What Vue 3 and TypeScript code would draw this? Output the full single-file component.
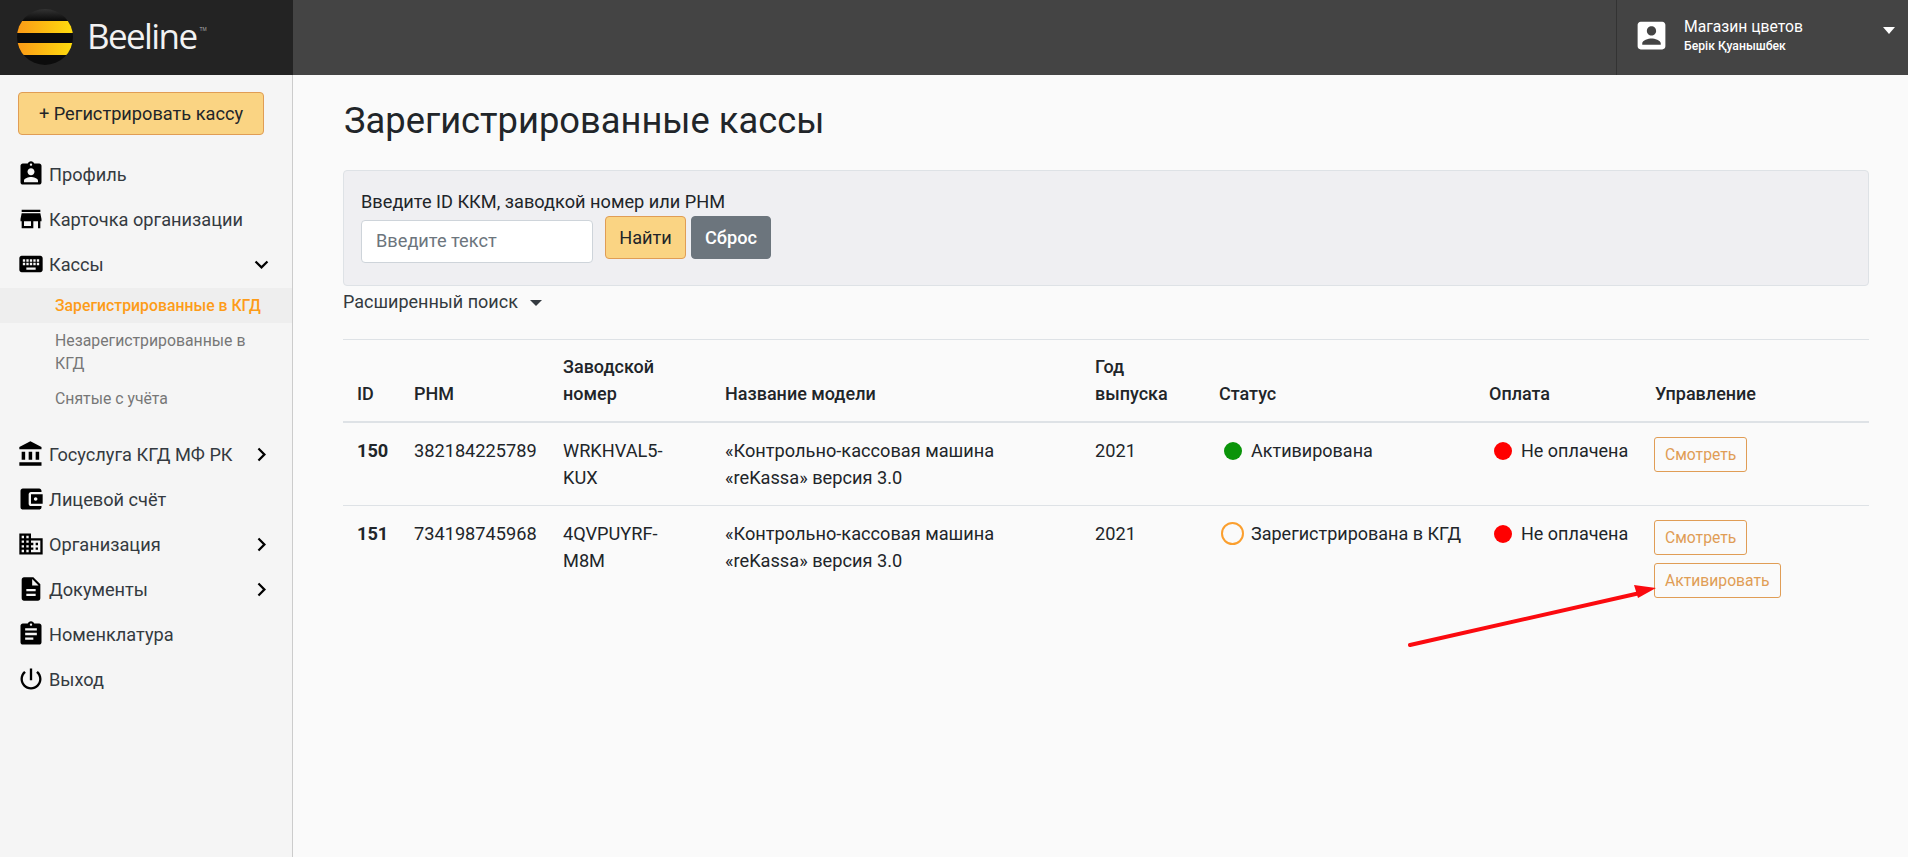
<script setup lang="ts">
interface NavItem { label: string; icon: string; chevron?: 'down' | 'right'; subs?: { label: string; active?: boolean }[] }
const icons: Record<string, string> = {
  ind: 'M19 3h-4.18C14.4 1.84 13.3 1 12 1c-1.3 0-2.4.84-2.82 2H5c-1.1 0-2 .9-2 2v14c0 1.1.9 2 2 2h14c1.1 0 2-.9 2-2V5c0-1.1-.9-2-2-2zm-7 0c.55 0 1 .45 1 1s-.45 1-1 1-1-.45-1-1 .45-1 1-1zm0 4c1.66 0 3 1.34 3 3s-1.34 3-3 3-3-1.34-3-3 1.34-3 3-3zm6 12H6v-1.4c0-2 4-3.1 6-3.1s6 1.1 6 3.1V19z',
  store: 'M20 4H4v2h16V4zm1 10v-2l-1-5H4l-1 5v2h1v6h10v-6h4v6h2v-6h1zm-9 4H6v-4h6v4z',
  keyboard: 'M20 5H4c-1.1 0-1.99.9-1.99 2L2 17c0 1.1.9 2 2 2h16c1.1 0 2-.9 2-2V7c0-1.1-.9-2-2-2zm-9 3h2v2h-2V8zm0 3h2v2h-2v-2zM8 8h2v2H8V8zm0 3h2v2H8v-2zm-1 2H5v-2h2v2zm0-3H5V8h2v2zm9 7H8v-2h8v2zm0-4h-2v-2h2v2zm0-3h-2V8h2v2zm3 3h-2v-2h2v2zm0-3h-2V8h2v2z',
  bank: 'M4 10v7h3v-7H4zm6 0v7h3v-7h-3zM2 22h19v-3H2v3zm14-12v7h3v-7h-3zm-4.5-9L2 6v2h19V6l-9.5-5z',
  wallet: 'M21 18v1c0 1.1-.9 2-2 2H5c-1.11 0-2-.9-2-2V5c0-1.1.89-2 2-2h14c1.1 0 2 .9 2 2v1h-9c-1.11 0-2 .9-2 2v8c0 1.1.89 2 2 2h9zm-9-2h10V8H12v8zm4-2.5c-.83 0-1.5-.67-1.5-1.5s.67-1.5 1.5-1.5 1.5.67 1.5 1.5-.67 1.5-1.5 1.5z',
  domain: 'M12 7V3H2v18h20V7H12zM6 19H4v-2h2v2zm0-4H4v-2h2v2zm0-4H4V9h2v2zm0-4H4V5h2v2zm4 12H8v-2h2v2zm0-4H8v-2h2v2zm0-4H8V9h2v2zm0-4H8V5h2v2zm10 12h-8v-2h2v-2h-2v-2h2v-2h-2V9h8v10zm-2-8h-2v2h2v-2zm0 4h-2v2h2v-2z',
  doc: 'M14 2H6c-1.1 0-1.99.9-1.99 2L4 20c0 1.1.89 2 1.99 2H18c1.1 0 2-.9 2-2V8l-6-6zm2 16H8v-2h8v2zm0-4H8v-2h8v2zm-3-5V3.5L18.5 9H13z',
  assign: 'M19 3h-4.18C14.4 1.84 13.3 1 12 1c-1.3 0-2.4.84-2.82 2H5c-1.1 0-2 .9-2 2v14c0 1.1.9 2 2 2h14c1.1 0 2-.9 2-2V5c0-1.1-.9-2-2-2zm-7 0c.55 0 1 .45 1 1s-.45 1-1 1-1-.45-1-1 .45-1 1-1zm2 14H7v-2h7v2zm3-4H7v-2h10v2zm0-4H7V7h10v2z',
  power: 'M13 3h-2v10h2V3zm4.83 2.17l-1.42 1.42C17.99 7.86 19 9.81 19 12c0 3.87-3.13 7-7 7s-7-3.13-7-7c0-2.19 1.01-4.14 2.58-5.42L6.17 5.17C4.23 6.82 3 9.26 3 12c0 4.97 4.03 9 9 9s9-4.03 9-9c0-2.74-1.23-5.18-3.17-6.83z',
  box: 'M3 5v14c0 1.1.89 2 2 2h14c1.1 0 2-.9 2-2V5c0-1.1-.9-2-2-2H5c-1.11 0-2 .9-2 2zm12 4c0 1.66-1.34 3-3 3s-3-1.34-3-3 1.34-3 3-3 3 1.34 3 3zm-9 8c0-2 4-3.1 6-3.1s6 1.1 6 3.1v1H6v-1z',
  down: 'M7.41 8.59L12 13.17l4.59-4.58L18 10l-6 6-6-6 1.41-1.41z',
  right: 'M8.59 16.59L13.17 12 8.59 7.41 10 6l6 6-6 6-1.41-1.41z',
}
const nav: NavItem[] = [
  { label: 'Профиль', icon: 'ind' },
  { label: 'Карточка организации', icon: 'store' },
  { label: 'Кассы', icon: 'keyboard', chevron: 'down', subs: [
    { label: 'Зарегистрированные в КГД', active: true },
    { label: 'Незарегистрированные в КГД' },
    { label: 'Снятые с учёта' },
  ] },
  { label: 'Госуслуга КГД МФ РК', icon: 'bank', chevron: 'right' },
  { label: 'Лицевой счёт', icon: 'wallet' },
  { label: 'Организация', icon: 'domain', chevron: 'right' },
  { label: 'Документы', icon: 'doc', chevron: 'right' },
  { label: 'Номенклатура', icon: 'assign' },
  { label: 'Выход', icon: 'power' },
]
const cols = [57, 149, 162, 370, 124, 270, 166, 228]
const rows = [
  { id: 150, rnm: '382184225789', serial: ['WRKHVAL5-', 'KUX'], status: 'Активирована', dot: 'green', activate: false },
  { id: 151, rnm: '734198745968', serial: ['4QVPUYRF-', 'M8M'], status: 'Зарегистрирована в КГД', dot: 'ring', activate: true },
]
</script>

<template>
  <div class="page">
    <header class="top">
      <div class="brand">
        <svg class="logo" viewBox="0 0 56 56" width="56" height="56">
          <defs>
            <clipPath id="ball"><circle cx="28" cy="28" r="28" /></clipPath>
            <linearGradient id="gold" x1="0" x2="1" y1="0" y2="0">
              <stop offset="0" stop-color="#fb9a17" />
              <stop offset="1" stop-color="#fedc0e" />
            </linearGradient>
            <linearGradient id="shade" x1="0" x2="0" y1="0" y2="1">
              <stop offset="0" stop-color="#333" />
              <stop offset="0.2" stop-color="#0c0c0c" />
            </linearGradient>
          </defs>
          <g clip-path="url(#ball)">
            <rect width="56" height="56" fill="url(#shade)" />
            <rect y="12" width="56" height="12" fill="url(#gold)" />
            <rect y="34" width="56" height="12" fill="url(#gold)" />
          </g>
        </svg>
        <span class="wordmark">Beeline</span><span class="tm">TM</span>
      </div>
      <div class="spacer"></div>
      <div class="account">
        <svg class="acc-icon" viewBox="0 0 24 24"><path :d="icons.box" /></svg>
        <div class="acc-text">
          <div class="acc-name">Магазин цветов</div>
          <div class="acc-sub">Берік Қуанышбек</div>
        </div>
        <span class="acc-caret"></span>
      </div>
    </header>

    <div class="body">
      <aside class="side">
        <button class="btn-reg">+ Регистрировать кассу</button>
        <nav class="nav">
          <div v-for="item in nav" :key="item.label" class="nav-group">
            <div class="nav-item">
              <svg class="nav-icon" viewBox="0 0 24 24"><path :d="icons[item.icon]" /></svg>
              <span class="nav-label">{{ item.label }}</span>
              <svg v-if="item.chevron" class="nav-chev" viewBox="0 0 24 24"><path :d="icons[item.chevron]" /></svg>
            </div>
            <div v-if="item.subs" class="subs">
              <div v-for="s in item.subs" :key="s.label" class="sub" :class="{ active: s.active }">{{ s.label }}</div>
            </div>
          </div>
        </nav>
      </aside>

      <main class="main">
        <h1 class="title">Зарегистрированные кассы</h1>
        <section class="search">
          <div class="search-label">Введите ID ККМ, заводкой номер или РНМ</div>
          <div class="search-row">
            <input class="search-input" placeholder="Введите текст" />
            <button class="btn btn-find">Найти</button>
            <button class="btn btn-reset">Сброс</button>
          </div>
        </section>
        <div class="advanced">Расширенный поиск <span class="adv-caret"></span></div>
        <table class="table">
          <colgroup><col v-for="(c, i) in cols" :key="i" :style="{ width: c + 'px' }" /></colgroup>
          <thead>
            <tr>
              <th>ID</th><th>РНМ</th><th>Заводской номер</th><th>Название модели</th>
              <th>Год выпуска</th><th>Статус</th><th>Оплата</th><th>Управление</th>
            </tr>
          </thead>
          <tbody>
            <tr v-for="r in rows" :key="r.id">
              <td class="strong">{{ r.id }}</td>
              <td>{{ r.rnm }}</td>
              <td>{{ r.serial[0] }}<br />{{ r.serial[1] }}</td>
              <td>«Контрольно-кассовая машина<br />«reKassa» версия 3.0</td>
              <td>2021</td>
              <td>
                <div class="state"><span class="dot" :class="r.dot"></span>{{ r.status }}</div>
              </td>
              <td>
                <div class="state pay"><span class="dot red"></span>Не оплачена</div>
              </td>
              <td class="ctl">
                <div class="actions">
                  <button class="btn-line">Смотреть</button>
                  <button v-if="r.activate" class="btn-line">Активировать</button>
                </div>
              </td>
            </tr>
          </tbody>
        </table>
      </main>
    </div>

    <svg class="arrow" width="280" height="70" viewBox="0 0 280 70">
      <path d="M4 61 L234 9" stroke="#fb0a0f" stroke-width="4" stroke-linecap="round" fill="none" />
      <path d="M250 4 L228 1 L232 14 Z" fill="#fb0a0f" />
    </svg>
  </div>
</template>

<style>
html, body { margin: 0; height: 100%; overflow: hidden; background: #fafafa; }
</style>

<style scoped>
.page {
  position: relative;
  width: 1908px;
  height: 857px;
  display: flex;
  flex-direction: column;
  font-family: Roboto, "Noto Sans", sans-serif;
  color: #212529;
  font-size: 18.2px;
  overflow: hidden;
}
.top { height: 75px; display: flex; background: #444; flex: none; }
.brand {
  width: 293px;
  background: #232323;
  display: flex;
  align-items: center;
  padding-left: 17px;
  box-sizing: border-box;
}
.logo { flex: none; margin-top: -1px; }
.wordmark {
  font-family: "Open Sans", sans-serif;
  color: #f2f2f2;
  font-size: 35px;
  font-weight: 500;
  letter-spacing: -1.6px;
  margin-left: 14px;
  margin-top: -4px;
}
.tm { color: #aaa; font-size: 5px; margin: -17px 0 0 3px; font-family: "Liberation Sans", sans-serif; }
.spacer { flex: 1; }
.account {
  width: 292px;
  box-sizing: border-box;
  border-left: 1px solid #333;
  display: flex;
  align-items: center;
  padding-left: 16px;
  position: relative;
  color: #fff;
}
.acc-icon { width: 37px; height: 37px; fill: #fff; flex: none; margin-top: -5px; }
.acc-text { margin-left: 14px; margin-top: -6px; }
.acc-name { font-size: 15.7px; line-height: 22px; }
.acc-sub { font-size: 12.2px; line-height: 16px; font-weight: 500; }
.acc-caret {
  position: absolute;
  right: 13px;
  top: 27px;
  border-left: 6px solid transparent;
  border-right: 6px solid transparent;
  border-top: 7px solid #fff;
}
.body { flex: 1; display: flex; min-height: 0; }
.side {
  width: 293px;
  box-sizing: border-box;
  background: #f5f5f5;
  border-right: 1px solid #ccc;
  flex: none;
  padding-top: 17px;
}
.btn-reg {
  display: block;
  margin-left: 18px;
  width: 246px;
  height: 43px;
  background: #fad483;
  border: 1px solid #e09d55;
  border-radius: 4px;
  font: 400 18.2px Roboto, sans-serif;
  color: #212529;
  padding: 0;
}
.nav { margin-top: 17px; }
.nav-item {
  height: 45px;
  display: flex;
  align-items: center;
  padding-left: 17px;
  font-size: 18.2px;
  color: #343a40;
  position: relative;
}
.nav-icon { width: 28px; height: 28px; fill: #000; flex: none; margin-top: -2px; }
.nav-label { margin-left: 4px; }
.nav-chev { position: absolute; left: 248px; top: 9px; width: 27px; height: 27px; fill: #000; }
.subs { padding-bottom: 16px; margin-top: 1px; }
.sub {
  padding: 6px 24px 6px 55px;
  font-size: 15.8px;
  line-height: 23px;
  color: #777;
}
.sub.active { font-weight: 500; color: #fd9c19; background: #eee; }
.main { flex: 1; padding: 0 39px 0 50px; min-width: 0; }
.title { font-size: 36.3px; font-weight: 400; line-height: 46px; margin: 23px 0 26px 1px; color: #212529; }
.search {
  height: 116px;
  box-sizing: border-box;
  background: #efeff2;
  border: 1px solid #dee2e6;
  border-radius: 4px;
  padding: 18px 17px;
}
.search-label { line-height: 26px; }
.search-row { display: flex; align-items: flex-start; margin-top: 1px; }
.search-input {
  width: 232px;
  height: 43px;
  box-sizing: border-box;
  border: 1px solid #ced4da;
  border-radius: 4px;
  padding: 0 14px 2px;
  font: 400 18.2px Roboto, sans-serif;
  margin-top: 4px;
  background: #fff;
  outline: none;
}
.search-input::placeholder { color: #6c757d; opacity: 1; }
.btn { height: 43px; box-sizing: border-box; border-radius: 4px; font: 400 18.2px Roboto, sans-serif; padding: 0; width: 81px; }
.btn-find { margin-left: 12px; background: #fad483; border: 1px solid #e09d55; color: #212529; }
.btn-reset { margin-left: 5px; background: #6c757d; border: 1px solid #6c757d; color: #fff; width: 80px; font-weight: 500; }
.advanced { margin-top: 6px; line-height: 20px; font-size: 18px; color: #343a40; }
.adv-caret {
  display: inline-block;
  margin-left: 8px;
  vertical-align: 2px;
  border-left: 6px solid transparent;
  border-right: 6px solid transparent;
  border-top: 6px solid #343a40;
}
.table { width: 1526px; table-layout: fixed; border-collapse: collapse; margin-top: 27px; border-top: 1px solid #dee2e6; }
th {
  text-align: left;
  font-weight: 500;
  font-size: 18px;
  line-height: 27px;
  padding: 13px 14px 14px;
  vertical-align: bottom;
  border-bottom: 2px solid #dee2e6;
  color: #212529;
}
td {
  line-height: 27px;
  padding: 14px;
  vertical-align: top;
  border-bottom: 1px solid #dee2e6;
  color: #212529;
}
tbody tr:last-child td { border-bottom: none; }
.strong { font-weight: 700; }
.state { display: flex; align-items: center; height: 27px; white-space: nowrap; font-size: 18px; }
.dot { width: 18px; height: 18px; border-radius: 50%; flex: none; margin: 0 9px 0 5px; box-sizing: border-box; }
.dot.green { background: #0a9409; }
.dot.red { background: #f00; }
.dot.ring { width: 23px; height: 23px; border: 2.5px solid #fb9f2e; margin: 0 7px 0 2px; }
.ctl { padding-left: 13px; }
.actions { display: flex; flex-direction: column; align-items: flex-start; gap: 8px; }
.btn-line {
  height: 35px;
  box-sizing: border-box;
  background: transparent;
  border: 1px solid #e09d55;
  border-radius: 3px;
  color: #e09d55;
  font: 400 15.7px Roboto, sans-serif;
  padding: 0 10px;
}
.arrow { position: absolute; left: 1406px; top: 584px; }
</style>
